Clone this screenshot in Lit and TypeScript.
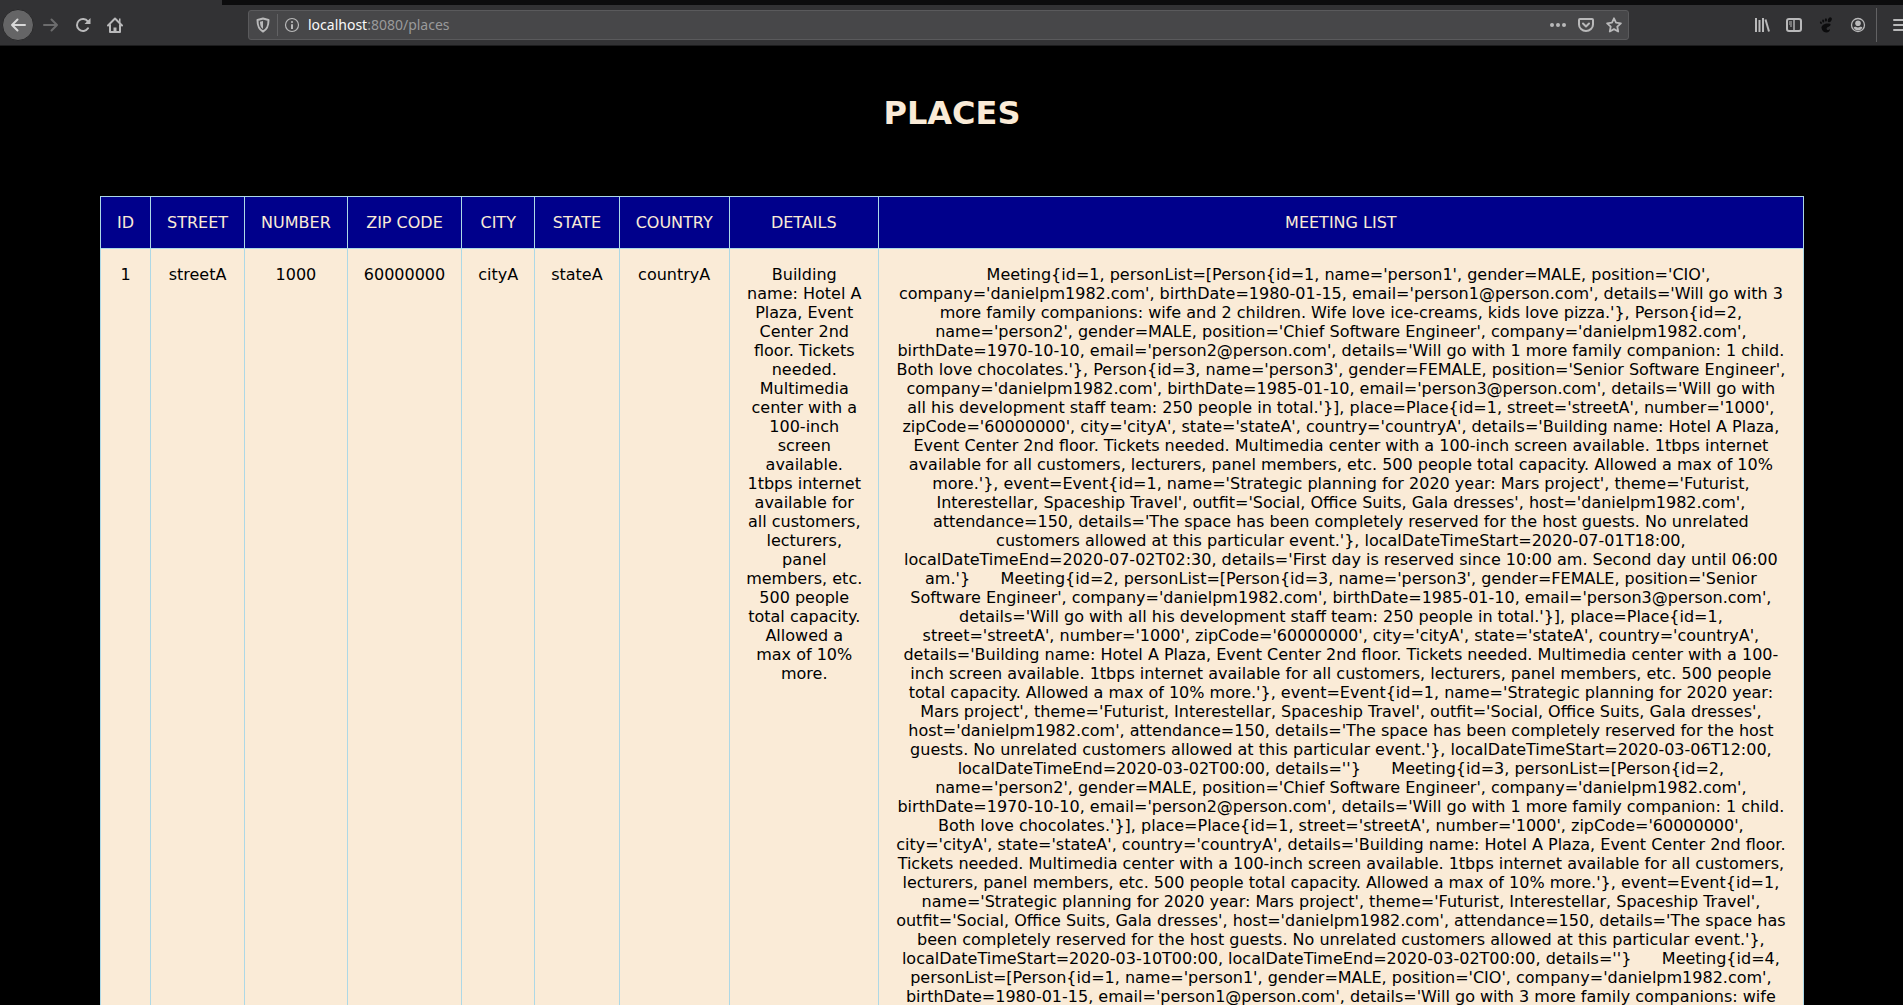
import { LitElement, html, css, svg } from "lit";
import { customElement } from "lit/decorators.js";

const PERSON_1 =
  "Person{id=1, name='person1', gender=MALE, position='CIO', company='danielpm1982.com', birthDate=1980-01-15, email='person1@person.com', details='Will go with 3 more family companions: wife and 2 children. Wife love ice-creams, kids love pizza.'}";
const PERSON_2 =
  "Person{id=2, name='person2', gender=MALE, position='Chief Software Engineer', company='danielpm1982.com', birthDate=1970-10-10, email='person2@person.com', details='Will go with 1 more family companion: 1 child. Both love chocolates.'}";
const PERSON_3 =
  "Person{id=3, name='person3', gender=FEMALE, position='Senior Software Engineer', company='danielpm1982.com', birthDate=1985-01-10, email='person3@person.com', details='Will go with all his development staff team: 250 people in total.'}";
const DETAILS =
  "Building name: Hotel A Plaza, Event Center 2nd floor. Tickets needed. Multimedia center with a 100-inch screen available. 1tbps internet available for all customers, lecturers, panel members, etc. 500 people total capacity. Allowed a max of 10% more.";
const PLACE = `Place{id=1, street='streetA', number='1000', zipCode='60000000', city='cityA', state='stateA', country='countryA', details='${DETAILS}'}`;
const EVENT =
  "Event{id=1, name='Strategic planning for 2020 year: Mars project', theme='Futurist, Interestellar, Spaceship Travel', outfit='Social, Office Suits, Gala dresses', host='danielpm1982.com', attendance=150, details='The space has been completely reserved for the host guests. No unrelated customers allowed at this particular event.'}";

const meeting = (id: number, people: string[], start: string, end: string, details: string) =>
  `Meeting{id=${id}, personList=[${people.join(", ")}], place=${PLACE}, event=${EVENT}, localDateTimeStart=${start}, localDateTimeEnd=${end}, details='${details}'}`;

const NBSP = "\u00a0";
const MEETINGS = [
  meeting(1, [PERSON_1, PERSON_2, PERSON_3], "2020-07-01T18:00", "2020-07-02T02:30",
    "First day is reserved since 10:00 am. Second day until 06:00 am."),
  meeting(2, [PERSON_3], "2020-03-06T12:00", "2020-03-02T00:00", ""),
  meeting(3, [PERSON_2], "2020-03-10T00:00", "2020-03-02T00:00", ""),
  "Meeting{id=4, personList=[" + PERSON_1.slice(0, PERSON_1.indexOf(" and 2 children")),
]
  .map((m) => NBSP.repeat(3) + m)
  .join(NBSP.repeat(2) + " ");

const HEADERS = ["ID", "STREET", "NUMBER", "ZIP CODE", "CITY", "STATE", "COUNTRY", "DETAILS", "MEETING LIST"];
const ROW = ["1", "streetA", "1000", "60000000", "cityA", "stateA", "countryA"];

const line = (d: string, w = 2) =>
  svg`<path d=${d} fill="none" stroke="currentColor" stroke-width=${w} stroke-linecap="round" stroke-linejoin="round"/>`;

const icon = (body: unknown) =>
  html`<svg class="icon" viewBox="0 0 16 16" aria-hidden="true">${body}</svg>`;

const ICONS = {
  back: icon(line("M15 8H2M7.500 2.500 2 8l5.500 5.500")),
  forward: icon(line("M1 8h13M8.500 2.500 14 8l-5.500 5.500")),
  reload: icon(svg`${line("M13 11.300A6 6 0 1 1 12.800 4.400")}<path d="M15.500 1v6h-6z" fill="currentColor"/>`),
  home: icon(svg`${line("M1 8.500 8 1.500l7 7M3 8v7h10V8")}<path d="M6.500 15v-4.500h3V15M12 1.500h1.500V6L12 4.500z" fill="currentColor"/>`),
  shield: icon(svg`${line("M8 1.500 13.500 3c0 5.500-.8 9-5.500 11.500C3.300 12 2.500 8.500 2.500 3z")}<path d="M8 4 5 4.800C5.100 8.500 5.800 10.500 8 12z" fill="currentColor"/>`),
  info: icon(svg`<circle cx="8" cy="8" r="6.500" fill="none" stroke="currentColor" stroke-width="1.200"/><circle cx="8" cy="5" r="1.100" fill="currentColor"/><path d="M7 7.200h2V12H7z" fill="currentColor"/>`),
  dots: icon(svg`<circle cx="2" cy="8" r="2" fill="currentColor"/><circle cx="8" cy="8" r="2" fill="currentColor"/><circle cx="14" cy="8" r="2" fill="currentColor"/>`),
  pocket: icon(svg`${line("M2 2h12a1 1 0 0 1 1 1v4.500a7 6.500 0 0 1-14 0V3a1 1 0 0 1 1-1z")}${line("M5 6.500l3 3 3-3")}`),
  star: icon(line("M8 1.300l2 4.400 4.900.6-3.600 3.300.9 4.900L8 12.100l-4.200 2.400.9-4.900L1.100 6.300 6 5.700z", 1.8)),
  library: icon(svg`<path d="M1 1h2v14H1zM4.500 3h2v12h-2zM8 1h2v14H8z" fill="currentColor"/><path d="M11.500 2.500 15 14.500" stroke="currentColor" stroke-width="2"/>`),
  sidebar: icon(svg`<rect x="1" y="2" width="14" height="12" rx="2" fill="none" stroke="currentColor" stroke-width="2"/><path d="M7.300 2h1.400v12H7.300zM3 4.500h3v1H3zM3 6.500h3v1H3zM4 8.500h2v1H4z" fill="currentColor"/>`),
  foot: icon(svg`<g fill="currentColor"><ellipse cx="11.800" cy="2.800" rx="1.800" ry="2.600" transform="rotate(25 11.800 2.800)"/><ellipse cx="7.900" cy="2.900" rx="1.100" ry="1.700"/><ellipse cx="5.200" cy="4" rx="1" ry="1.500" transform="rotate(-15 5.200 4)"/><ellipse cx="2.900" cy="5.700" rx=".9" ry="1.300" transform="rotate(-25 2.900 5.700)"/><path d="M12.500 7C9 5.500 3 7.500 3.500 11c.4 3 3 4.500 5 4.500 2.200 0 3.500-1.500 3.500-3.500-1.300 1.500-3.300 1.200-3.400-.3C8.500 9.700 13 10 12.500 7z"/></g>`),
  account: icon(svg`<circle cx="8" cy="8" r="6.500" fill="none" stroke="currentColor" stroke-width="1.300"/><circle cx="8" cy="6.300" r="2.800" fill="currentColor"/><path d="M3.600 10.500c1.500 3.800 7.300 3.800 8.800 0-1-.8-1.700-.8-2.200-.8-1.300 1-3.100 1-4.400 0-.5 0-1.200 0-2.200.8z" fill="currentColor"/>`),
  menu: icon(line("M1 3h14M1 8h14M1 13h14")),
};

@customElement("app-root")
export class AppRoot extends LitElement {
  static styles = css`
    :host {
      display: flex;
      flex-direction: column;
      height: 100vh;
      overflow: hidden;
      background: #000;
      font: 16px/19px "DejaVu Sans", sans-serif;
    }
    .tabs {
      display: flex;
      flex: none;
      height: 5px;
      background: #323234;
    }
    .tabs-rest {
      flex: 1;
      margin-left: 222px;
      background: #0c0c0d;
    }
    .toolbar {
      display: flex;
      flex: none;
      align-items: center;
      height: 40px;
      background: #323234;
      color: #b9b9ba;
      border-bottom: 1px solid #1c1c1d;
      overflow: hidden;
    }
    .nav {
      display: flex;
      align-items: center;
      gap: 16px;
      padding-left: 2px;
    }
    .tools {
      display: flex;
      align-items: center;
      gap: 16px;
      margin-left: auto;
      margin-right: -6px;
    }
    .button {
      display: flex;
      flex: none;
      padding: 0;
      border: 0;
      background: none;
      color: inherit;
    }
    .back {
      padding: 7px;
      border: 1px solid #29292a;
      border-radius: 50%;
      background: #656566;
      color: #d8d8d8;
      margin-right: -7px;
    }
    .forward {
      color: #6c6c6d;
    }
    .foot {
      color: #0c0c0d;
    }
    .icon {
      display: block;
      width: 16px;
      height: 16px;
    }
    .address {
      display: flex;
      flex: 0 1 1381px;
      align-items: center;
      gap: 6px;
      box-sizing: border-box;
      height: 30px;
      margin-left: 125px;
      padding: 0 6px;
      border: 1px solid #5a5a5c;
      border-radius: 3px;
      background: #474749;
    }
    .divider {
      width: 1px;
      height: 22px;
      background: #626264;
    }
    .tall {
      height: 34px;
      margin-left: -6px;
    }
    .url {
      flex: 1;
      padding-left: 2px;
      color: #9a9a9b;
      font: 14px/20px "Noto Sans", sans-serif;
    }
    .host {
      color: #f9f9fa;
    }
    .actions {
      display: flex;
      gap: 12px;
    }
    .page {
      flex: 1;
      min-height: 0;
      overflow: auto;
      scrollbar-width: none;
      padding: 48px 99px 0 100px;
    }
    .title {
      margin: 0 0 64px;
      color: antiquewhite;
      font-size: 32px;
      line-height: 38px;
      text-align: center;
    }
    .places {
      width: 100%;
      border-collapse: collapse;
      text-align: center;
    }
    .fit {
      width: 1px;
    }
    .details-col {
      width: 149px;
    }
    .head,
    .cell {
      padding: 16px;
      border: 1px solid lightblue;
      vertical-align: top;
    }
    .head {
      background: darkblue;
      color: antiquewhite;
      font-weight: normal;
      white-space: nowrap;
    }
    .cell {
      background: antiquewhite;
      color: #000;
    }
    .details {
      padding-right: 15px;
    }
  `;

  private button(label: string, glyph: unknown, extra = "") {
    return html`<button class="button ${extra}" type="button" aria-label=${label}>${glyph}</button>`;
  }

  render() {
    return html`
      <div class="tabs"><div class="tabs-rest"></div></div>
      <header class="toolbar">
        <nav class="nav">
          ${this.button("Back", ICONS.back, "back")}
          ${this.button("Forward", ICONS.forward, "forward")}
          ${this.button("Reload", ICONS.reload)}
          ${this.button("Home", ICONS.home)}
        </nav>
        <div class="address">
          ${this.button("Tracking protection", ICONS.shield)}
          <span class="divider"></span>
          ${this.button("Site information", ICONS.info)}
          <span class="url"><span class="host">localhost</span>:8080/places</span>
          <div class="actions">
            ${this.button("Page actions", ICONS.dots)}
            ${this.button("Save to Pocket", ICONS.pocket)}
            ${this.button("Bookmark", ICONS.star)}
          </div>
        </div>
        <div class="tools">
          ${this.button("Library", ICONS.library)}
          ${this.button("Sidebars", ICONS.sidebar)}
          ${this.button("GNOME extensions", ICONS.foot, "foot")}
          ${this.button("Account", ICONS.account)}
          <span class="divider tall"></span>
          ${this.button("Menu", ICONS.menu)}
        </div>
      </header>
      <main class="page">
        <h1 class="title">PLACES</h1>
        <table class="places">
          <colgroup>
            <col class="fit" span="7" />
            <col class="details-col" />
            <col />
          </colgroup>
          <thead>
            <tr>${HEADERS.map((h) => html`<th class="head" scope="col">${h}</th>`)}</tr>
          </thead>
          <tbody>
            <tr>
              ${ROW.map((v) => html`<td class="cell">${v}</td>`)}
              <td class="cell details">${DETAILS}</td>
              <td class="cell">${MEETINGS}</td>
            </tr>
          </tbody>
        </table>
      </main>
    `;
  }
}
